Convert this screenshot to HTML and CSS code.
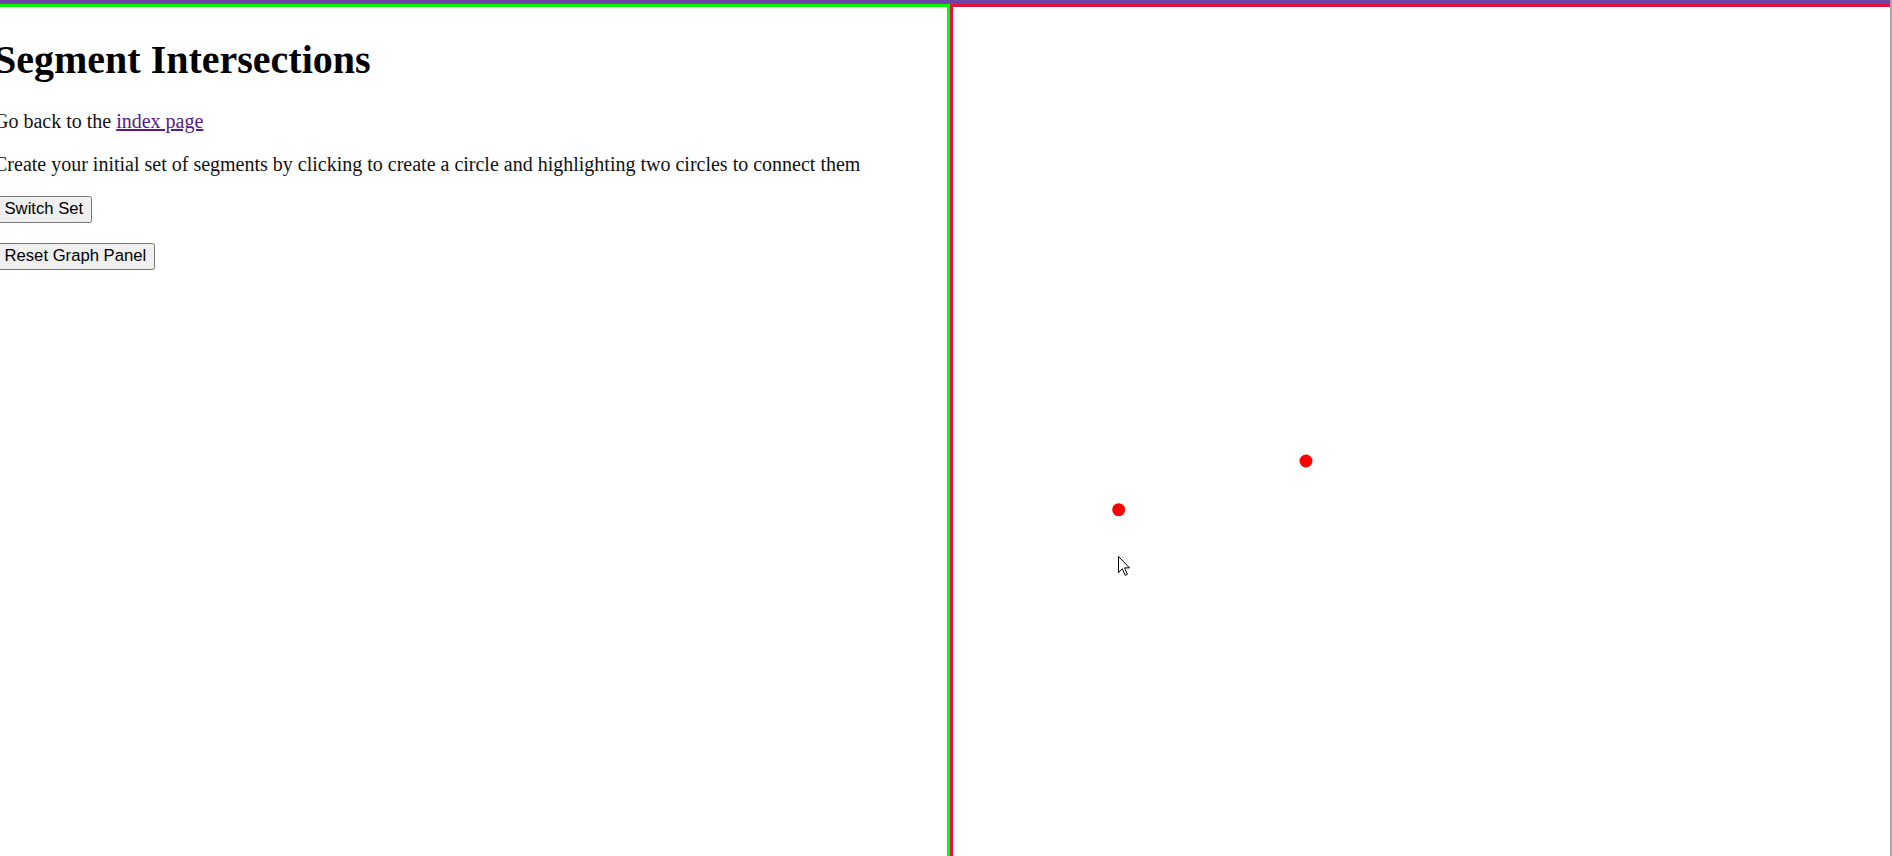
FILE: index.html
```html
<!DOCTYPE html>
<html>
<head>
<meta charset="utf-8">
<title>Segment Intersections</title>
<link rel="stylesheet" href="styles.css">
</head>
<body>
<div class="page">
  <div class="topbar"></div>
  <div class="panels">
    <div class="left-panel">
      <div class="left-content">
        <h1 class="title">Segment Intersections</h1>
        <p class="text">Go back to the <a class="link" href="#">index page</a></p>
        <p class="text">Create your initial set of segments by clicking to create a circle and highlighting two circles to connect them</p>
        <p class="btn-row"><button class="btn">Switch Set</button></p>
        <p class="btn-row"><button class="btn">Reset Graph Panel</button></p>
      </div>
    </div>
    <div class="right-panel">
      <svg class="graph" xmlns="http://www.w3.org/2000/svg">
        <circle cx="353" cy="454" r="6.5" fill="#ff0000"/>
        <circle cx="165.7" cy="502.7" r="6.5" fill="#ff0000"/>
      </svg>
      <svg class="cursor" width="13" height="20" viewBox="0 0 13 20" xmlns="http://www.w3.org/2000/svg">
        <path d="M0.5 0.5 L0.5 16.5 L4.3 12.8 L7.2 19.3 L9.4 18.3 L6.6 11.9 L11.5 11.9 Z" fill="#ffffff" stroke="#000000" stroke-width="1" stroke-linejoin="miter"/>
      </svg>
    </div>
  </div>
</div>
</body>
</html>
```

FILE: styles.css
```css
html, body {
  margin: 0;
  padding: 0;
  height: 100%;
  background: #ffffff;
}

body {
  font-family: "Liberation Serif", "Times New Roman", serif;
  color: #111111;
  overflow: hidden;
}

.page {
  height: 856px;
  display: flex;
  flex-direction: column;
  border-right: 2px solid #a6a6a6;
  box-sizing: border-box;
}

.topbar {
  height: 4px;
  background: #6e44a4;
  flex: none;
}

.panels {
  flex: 1;
  display: flex;
  min-height: 0;
}

.left-panel {
  width: 950px;
  flex: none;
  box-sizing: border-box;
  border-top: 3px solid #00ff00;
  border-right: 3px solid #00ff00;
  overflow: hidden;
}

.left-content {
  margin-left: -6px;
  padding-top: 2px;
}

.title {
  font-size: 40px;
  font-weight: bold;
  color: #000000;
  margin: 26.8px 0;
}

.text {
  font-size: 20px;
  margin: 20px 0;
}

.link {
  color: #551a8b;
  text-decoration: underline;
}

.btn-row {
  font-size: 20px;
  margin: 20px 0 20px 2px;
}

.btn {
  font-family: "Liberation Sans", Arial, sans-serif;
  font-size: 16.67px;
  color: #000000;
  background: #efefef;
  border: 1.25px solid #767676;
  border-radius: 2.5px;
  padding: 1.5px 7.5px;
  height: 27px;
  line-height: normal;
  margin: 0;
}

.right-panel {
  flex: 1;
  position: relative;
  box-sizing: border-box;
  border-top: 3px solid #e3133f;
  border-left: 3px solid #e3133f;
}

.graph {
  display: block;
  width: 100%;
  height: 100%;
}

.cursor {
  position: absolute;
  left: 165px;
  top: 549px;
}
```
